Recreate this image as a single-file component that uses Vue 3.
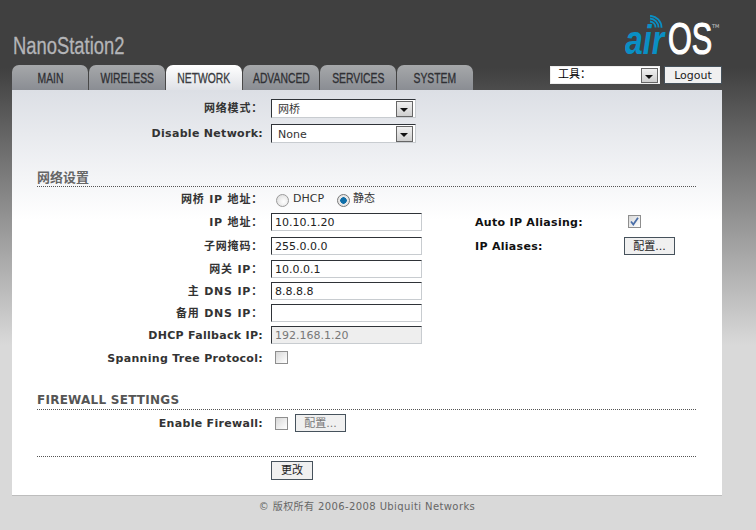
<script setup>
const tabs = ['MAIN', 'WIRELESS', 'NETWORK', 'ADVANCED', 'SERVICES', 'SYSTEM']
</script>

<template>
  <div class="page">
    <header class="header">
      <div class="product"><span>NanoStation2</span></div>
      <div class="logo">
        <svg class="waves" width="16" height="16" viewBox="0 0 16 16" aria-hidden="true">
          <g fill="none" stroke="#0a8fc4" stroke-width="1.8">
            <path d="M1 6.5a6 6 0 0 1 5.5 6" />
            <path d="M1 3.5a9 9 0 0 1 8.5 9" />
            <path d="M1 .8a12 12 0 0 1 11.5 12" />
          </g>
        </svg>
        <span class="air"><b>air</b></span><span class="os"><b>OS</b></span><span class="tm">TM</span>
      </div>
    </header>

    <div class="nav">
      <div class="tabs">
        <div v-for="t in tabs" :key="t" class="tab" :class="{ active: t === 'NETWORK' }"><span>{{ t }}</span></div>
      </div>
      <div class="tools">
        <div class="select tool-select"><span>工具：</span><i class="arrow"></i></div>
        <button class="btn logout">Logout</button>
      </div>
    </div>

    <main class="content">
      <div class="row r-select">
        <label class="cjk">网络模式：</label>
        <div class="select form-select"><span>网桥</span><i class="arrow"></i></div>
      </div>
      <div class="row r-select">
        <label>Disable Network:</label>
        <div class="select form-select"><span>None</span><i class="arrow"></i></div>
      </div>

      <h2 class="section first">网络设置</h2>

      <div class="row r-radio">
        <label class="cjk">网桥 IP 地址：</label>
        <div class="radios">
          <span class="radio"></span><span class="radio-text">DHCP</span>
          <span class="radio on"></span><span class="radio-text">静态</span>
        </div>
      </div>
      <div class="row h24">
        <label class="cjk">IP 地址：</label>
        <input class="text" value="10.10.1.20" />
        <label class="side">Auto IP Aliasing:</label>
        <span class="check checked">
          <svg width="9" height="9" viewBox="0 0 9 9" aria-hidden="true"><path d="M1 4.5l2.3 3L8 .8" fill="none" stroke="#4a6ea8" stroke-width="1.8" /></svg>
        </span>
      </div>
      <div class="row h23">
        <label class="cjk">子网掩码：</label>
        <input class="text" value="255.0.0.0" />
        <label class="side">IP Aliases:</label>
        <button class="btn cfg">配置...</button>
      </div>
      <div class="row h22">
        <label class="cjk">网关 IP：</label>
        <input class="text" value="10.0.0.1" />
      </div>
      <div class="row h22">
        <label class="cjk">主 DNS IP：</label>
        <input class="text" value="8.8.8.8" />
      </div>
      <div class="row h22">
        <label class="cjk">备用 DNS IP：</label>
        <input class="text" value="" />
      </div>
      <div class="row h22">
        <label>DHCP Fallback IP:</label>
        <input class="text off" value="192.168.1.20" disabled />
      </div>
      <div class="row h22">
        <label class="low">Spanning Tree Protocol:</label>
        <div class="inline"><span class="check"></span></div>
      </div>

      <h2 class="section second">FIREWALL SETTINGS</h2>

      <div class="row r-fw">
        <label>Enable Firewall:</label>
        <div class="inline">
          <span class="check"></span>
          <button class="btn cfg dim">配置...</button>
        </div>
      </div>

      <div class="rule"></div>
      <div class="row r-submit">
        <span></span>
        <button class="btn apply">更改</button>
      </div>
    </main>

    <footer class="footer">© 版权所有 2006-2008 Ubiquiti Networks</footer>
  </div>
</template>

<style>
html, body { margin: 0; }
body { background: #d9d9d9; }
</style>

<style scoped>
.page {
  width: 756px;
  height: 530px;
  overflow: hidden;
  box-sizing: border-box;
  padding: 0 34px 0 12px;
  background: linear-gradient(#404040 0, #404040 68px, #d9d9d9 345px, #d9d9d9 100%);
  font: 11px/13px "DejaVu Sans", "Noto Sans CJK SC", sans-serif;
  color: #333;
}
.header {
  height: 65px;
  display: flex;
  justify-content: space-between;
  align-items: flex-start;
}
.product {
  margin: 34px 0 0 1px;
  width: 111px;
  font: 23px/24px "Liberation Sans", sans-serif;
}
.product span {
  display: inline-block;
  transform: scaleX(.8);
  transform-origin: 0 50%;
  white-space: nowrap;
  color: #b4b5b8;
  -webkit-text-stroke: .3px #b4b5b8;
}
.logo {
  position: relative;
  display: flex;
  align-items: baseline;
  height: 48px;
  margin-top: 15px;
  margin-right: 2px;
  color: #fff;
  font-family: "Liberation Sans", sans-serif;
  line-height: 48px;
}
.waves { position: absolute; left: 24px; top: 0; }
.air { width: 39px; margin-right: 4px; font-size: 40px; font-style: italic; color: #0a8fc4; }
.air b { display: inline-block; transform: scaleX(.8); transform-origin: 0 50%; }
.os { width: 41px; font-size: 45px; }
.os b { display: inline-block; font-weight: normal; -webkit-text-stroke: 1.2px #fff; transform: scaleX(.68); transform-origin: 0 50%; }
.tm { font: 5px/6px "DejaVu Sans", sans-serif; color: #ccc; align-self: flex-start; margin-top: 8px; margin-left: 3px; width: 8px; }

.nav { display: flex; justify-content: space-between; height: 25px; }
.tabs { display: flex; gap: 1px; }
.tab {
  width: 76px;
  height: 25px;
  border-radius: 7px 7px 0 0;
  background: linear-gradient(#a6a8aa, #8a8d93);
  font: 14px/27px "Liberation Sans", sans-serif;
  text-align: center;
  color: #2f3034;
}
.tab span { display: inline-block; transform: scaleX(.74); -webkit-text-stroke: .3px currentColor; }
.tab.active { background: linear-gradient(#fff, #dfe1e6); color: #3a3b40; }
.tools { display: flex; gap: 4px; align-items: flex-start; padding-top: 1px; }

.select {
  position: relative;
  box-sizing: border-box;
  background: #fff;
  border-style: solid;
  border-width: 1px;
  border-color: #2f3338 #c8ccd0 #c8ccd0 #2f3338;
  padding-left: 6px;
}
.tool-select {
  width: 110px;
  height: 18px;
  line-height: 16px;
  color: #000;
  border-color: #eee;
  padding-left: 7px;
}
.form-select {
  width: 145px;
  height: 19px;
  line-height: 20px;
}
.arrow {
  position: absolute;
  right: 1px;
  top: 1px;
  box-sizing: border-box;
  width: 17px;
  height: 15px;
  border: 1px solid #666;
  background: linear-gradient(#f0f0f0, #cfcfcf);
}
.form-select .arrow { height: 16px; right: 2px; }
.arrow::after {
  content: "";
  position: absolute;
  left: 3px;
  top: 6px;
  border-style: solid;
  border-width: 4px 4.5px 0;
  border-color: #111 transparent transparent;
}
.btn {
  box-sizing: border-box;
  padding: 0;
  background: #f0f0f0;
  border: 1px solid #46525c;
  color: #222;
  font: 11px/13px "DejaVu Sans", "Noto Sans CJK SC", sans-serif;
}
.logout { width: 58px; height: 18px; }

.content {
  box-sizing: border-box;
  width: 710px;
  height: 406px;
  padding: 9px 26px 0 25px;
  background: linear-gradient(#dcdfe5 0, #ffffff 130px);
  border-bottom: 1px solid #bdbdbd;
}
.row {
  display: grid;
  grid-template-columns: 226px 151px 186px auto;
  column-gap: 8px;
  align-items: start;
}
.row label {
  text-align: right;
  font-weight: bold;
  line-height: 20px;
  white-space: nowrap;
  letter-spacing: .3px;
}
.row label.cjk { letter-spacing: .8px; }
.row label.low { line-height: 22px; }
.row label.side {
  text-align: left;
  color: #111;
  margin-left: 45px;
  grid-column: 3;
}
.r-select { height: 25px; }
.r-radio { height: 23px; margin-top: 3px; grid-template-columns: 226px auto; }
.h24 { height: 24px; }
.h23 { height: 23px; }
.h22 { height: 22px; }
.r-fw { height: 42px; margin-top: 4px; grid-template-columns: 226px auto; }
.r-submit { margin-top: 4px; grid-template-columns: 226px auto; }

.text {
  box-sizing: border-box;
  width: 151px;
  height: 18px;
  padding: 0 3px;
  margin: 0;
  background: #fff;
  border-style: solid;
  border-width: 1px;
  border-color: #2f3338 #c8ccd0 #c8ccd0 #2f3338;
  font: 11px/16px "DejaVu Sans", sans-serif;
  color: #222;
  outline: none;
}
.text.off { background: #eee; color: #777; }

.section {
  margin: 0;
  height: 18px;
  box-sizing: border-box;
  font: bold 12px/16px "DejaVu Sans", sans-serif;
  letter-spacing: .25px;
  color: #555;
  border-bottom: 1px dotted #555;
}
.section.first { margin-top: 20px; font: bold 13px/16px "Noto Sans CJK SC", sans-serif; color: #666; letter-spacing: 0; }
.section.second { margin-top: 22px; }
.rule { border-top: 1px dotted #555; }

.radios { display: flex; align-items: center; height: 18px; }
.radio {
  box-sizing: border-box;
  width: 13px;
  height: 13px;
  margin: 3px 4px 0 5px;
  border-radius: 50%;
  border: 1px solid #9a9a9a;
  background: radial-gradient(circle at 60% 60%, #fff, #d8d8d8);
}
.radio.on {
  margin-left: 13px;
  margin-right: 3px;
  border-color: #777;
  background: radial-gradient(circle, #0f6ea8 0, #0f6ea8 3px, #e8e8e8 3.5px);
}
.radio-text { color: #333; margin-top: -2px; }

.inline { display: flex; align-items: flex-start; gap: 7px; }
.check {
  display: flex;
  align-items: center;
  justify-content: center;
  box-sizing: border-box;
  width: 13px;
  height: 13px;
  margin-top: 3px;
  border: 1px solid #8e8e8e;
  background: linear-gradient(135deg, #d8d8d8, #fff);
}
.inline .check { margin-left: 4px; }
.check.checked { grid-column: 4; margin-left: 4px; margin-top: 2px; }
.cfg { width: 51px; height: 18px; grid-column: 4; }
.cfg.dim { color: #777; }
.apply { width: 42px; height: 19px; }

.footer {
  width: 710px;
  text-align: center;
  padding-top: 4px;
  color: #666;
  font-size: 10px;
  line-height: 13px;
  letter-spacing: .4px;
}
</style>
